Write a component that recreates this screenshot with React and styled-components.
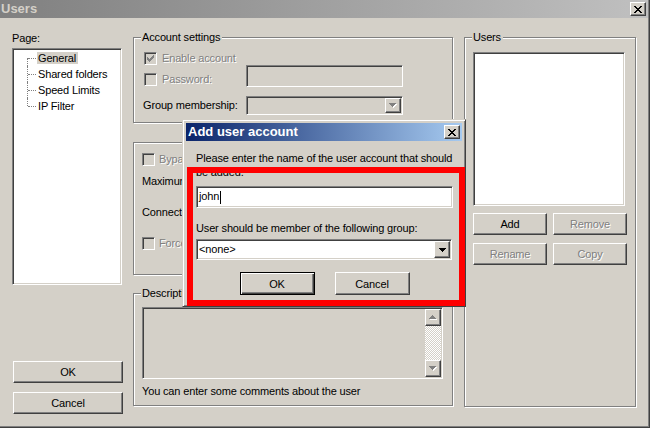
import styled, { createGlobalStyle, css } from 'styled-components';

const face = '#d4d0c8';
const light = '#ffffff';
const shadow = '#808080';
const dark = '#404040';

const GlobalStyle = createGlobalStyle`
  html, body {
    margin: 0;
    padding: 0;
    background: ${face};
  }
  body {
    font-family: "Liberation Sans", Arial, sans-serif;
    font-size: 11px;
    letter-spacing: -0.15px;
    color: #000;
  }
  * { box-sizing: border-box; }
`;

// classic 3D bevels
const raised = css`
  border: 1px solid;
  border-color: ${light} ${dark} ${dark} ${light};
  box-shadow: inset -1px -1px 0 ${shadow};
  background: ${face};
`;

const sunken = css`
  border: 1px solid;
  border-color: ${shadow} ${light} ${light} ${shadow};
  box-shadow: inset 1px 1px 0 ${dark}, inset -1px -1px 0 ${face};
`;

const disabledText = css`
  color: ${shadow};
  text-shadow: 1px 1px 0 ${light};
`;

// small pixel glyphs (caption X, check mark, arrows)
const GLYPHS = {
  close: ['##....##', '.##..##.', '..####..', '...##...', '..####..', '.##..##.', '##....##'],
  check: ['......#', '.....##', '#...###', '##.###.', '#####..', '.###...', '..#....'],
  down: ['#######', '.#####.', '..###..', '...#...'],
  up: ['...#...', '..###..', '.#####.', '#######'],
};

const GlyphSvg = styled.svg`
  display: block;
  flex: none;
`;

const Glyph = ({ name, color = '#000', etched }) => {
  const rows = GLYPHS[name];
  const cells = [];
  rows.forEach((row, y) => [...row].forEach((c, x) => { if (c === '#') cells.push([x, y]); }));
  const pad = etched ? 1 : 0;
  return (
    <GlyphSvg width={rows[0].length + pad} height={rows.length + pad} shapeRendering="crispEdges">
      {etched && cells.map(([x, y]) => (
        <rect key={`e${x}-${y}`} x={x + 1} y={y + 1} width="1" height="1" fill={light} />
      ))}
      {cells.map(([x, y]) => (
        <rect key={`${x}-${y}`} x={x} y={y} width="1" height="1" fill={color} />
      ))}
    </GlyphSvg>
  );
};

const Window = styled.div`
  position: relative;
  width: 650px;
  height: 428px;
  display: flex;
  flex-direction: column;
  background: ${face};
  border-right: 1px solid ${dark};
  border-bottom: 1px solid ${dark};
  box-shadow: inset -1px -1px 0 ${shadow};
  overflow: hidden;
`;

const TitleBar = styled.div`
  flex: none;
  height: 18px;
  margin-right: ${p => p.$inset || 0}px;
  display: flex;
  align-items: center;
  justify-content: space-between;
  padding: 0 2px 0 ${p => p.$pad ?? 1}px;
  background: ${p => (p.$active
    ? 'linear-gradient(to right, #0a246a, #a6caf0)'
    : 'linear-gradient(to right, #808080, #c0c0c0)')};
  color: ${p => (p.$active ? light : face)};
  font-weight: bold;
  font-size: 13px;
  letter-spacing: 0;
  line-height: 18px;
  white-space: nowrap;
`;

const CaptionButton = styled.button`
  ${raised}
  width: 16px;
  height: 14px;
  padding: 0;
  display: flex;
  align-items: center;
  justify-content: center;
`;

const Body = styled.div`
  flex: 1;
  display: flex;
  padding: 0 0 13px 12px;
`;

const Column = styled.div`
  width: ${p => p.$w}px;
  margin-left: ${p => p.$gap || 0}px;
  display: flex;
  flex-direction: column;
`;

const Label = styled.span`
  line-height: 13px;
  white-space: nowrap;
  ${p => p.$disabled && disabledText}
`;

const PageLabel = styled.div`
  margin-top: 13px;
  line-height: 14px;
`;

/* page tree */
const Tree = styled.ul`
  ${sunken}
  width: 110px;
  height: 237px;
  margin: 3px 0 0;
  padding: 1px 0 0 1px;
  list-style: none;
  background: ${light};
`;

const TreeItem = styled.li`
  position: relative;
  height: 16px;
  padding-left: 23px;
  display: flex;
  align-items: center;

  &::before {
    content: '';
    position: absolute;
    left: 14px;
    top: 8px;
    width: 8px;
    border-top: 1px dotted ${shadow};
  }
  &::after {
    content: '';
    position: absolute;
    left: 13px;
    top: ${p => (p.$first ? 8 : 0)}px;
    bottom: ${p => (p.$last ? 8 : 0)}px;
    border-left: 1px dotted ${shadow};
  }
`;

const TreeText = styled.span`
  line-height: 12px;
  padding: 0 2px 0 1px;
  background: ${p => (p.$selected ? face : 'transparent')};
  white-space: nowrap;
`;

const Spacer = styled.div`
  flex: 1;
`;

const ButtonStack = styled.div`
  display: flex;
  flex-direction: column;
  gap: 9px;
  padding-left: 1px;
`;

const Button = styled.button`
  ${raised}
  width: ${p => p.$w}px;
  height: ${p => p.$h || 22}px;
  padding: 0;
  font: inherit;
  letter-spacing: inherit;
  color: #000;
  ${p => p.disabled && disabledText}
  ${p => p.$default && css`
    border-color: #000;
    box-shadow: inset 1px 1px 0 ${light}, inset -1px -1px 0 ${dark}, inset -2px -2px 0 ${shadow};
  `}
`;

/* group boxes */
const GroupBox = styled.div`
  position: relative;
  flex: none;
  height: ${p => p.$h}px;
  margin-top: ${p => p.$top}px;
  padding: ${p => p.$pad};
  border: 1px solid ${shadow};
  box-shadow: inset 1px 1px 0 ${light}, 1px 1px 0 ${light};
  display: flex;
  flex-direction: column;
`;

const Legend = styled.span`
  position: absolute;
  top: -7px;
  left: 7px;
  padding: 0 2px 0 1px;
  line-height: 13px;
  background: ${face};
  white-space: nowrap;
`;

const Row = styled.div`
  display: flex;
  align-items: ${p => p.$align || 'center'};
  height: ${p => p.$h}px;
  margin-top: ${p => p.$top || 0}px;
  margin-left: ${p => p.$indent || 0}px;
`;

const Cell = styled.div`
  width: ${p => p.$w}px;
  flex: none;
  display: flex;
  align-items: center;
  gap: ${p => p.$gap || 5}px;
  margin-top: ${p => p.$top || 0}px;
`;

const CheckBox = styled.span`
  ${sunken}
  width: 13px;
  height: 13px;
  flex: none;
  display: flex;
  align-items: center;
  justify-content: center;
  background: ${p => (p.$disabled ? face : light)};
`;

const Field = styled.div`
  ${sunken}
  position: relative;
  width: ${p => p.$w}px;
  height: ${p => p.$h}px;
  flex: none;
  margin-top: ${p => p.$top || 0}px;
  padding: 2px 2px 2px ${p => p.$textPad ?? 3}px;
  display: flex;
  align-items: center;
  background: ${p => (p.$disabled ? face : light)};
  white-space: nowrap;
`;

const FieldText = styled.span`
  flex: 1;
  line-height: 13px;
`;

const Caret = styled.span`
  display: inline-block;
  width: 1px;
  height: 13px;
  margin-left: 1px;
  vertical-align: middle;
  background: #000;
`;

const DropButton = styled.span`
  ${raised}
  width: 16px;
  align-self: stretch;
  margin: -1px -1px -1px 0;
  display: flex;
  align-items: center;
  justify-content: center;
`;

const TextArea = styled.div`
  ${sunken}
  width: 301px;
  height: 72px;
  padding: 1px;
  display: flex;
  justify-content: flex-end;
  background: ${face};
`;

const ScrollBar = styled.div`
  width: 16px;
  display: flex;
  flex-direction: column;
`;

const ScrollButton = styled.span`
  ${raised}
  height: 17px;
  flex: none;
  display: flex;
  align-items: center;
  justify-content: center;
`;

const ScrollTrack = styled.span`
  flex: 1;
  background: repeating-conic-gradient(${light} 0 25%, ${face} 0 50%) 0 0 / 2px 2px;
`;

const Hint = styled.div`
  margin-top: 6px;
  line-height: 13px;
`;

const ListBox = styled.div`
  ${sunken}
  width: 152px;
  height: 154px;
  background: ${light};
`;

const ButtonGrid = styled.div`
  display: grid;
  grid-template-columns: 74px 74px;
  column-gap: 6px;
  row-gap: 8px;
  margin-top: 7px;
`;

/* add user dialog */
const Dialog = styled.div`
  position: absolute;
  left: 182px;
  top: 119px;
  width: 284px;
  height: 188px;
  padding: 3px;
  border: 1px solid;
  border-color: ${face} ${dark} ${dark} ${face};
  box-shadow: inset 1px 1px 0 ${light}, inset -1px -1px 0 ${shadow};
  background: ${face};
  display: flex;
  flex-direction: column;
`;

const DialogBody = styled.div`
  display: flex;
  flex-direction: column;
  padding: 10px 9px 0 10px;
`;

const Prompt = styled.div`
  line-height: 14px;
  white-space: nowrap;
`;

const DialogLabel = styled.div`
  margin-top: 13px;
  line-height: 14px;
`;

const DialogButtons = styled.div`
  display: flex;
  justify-content: center;
  gap: 20px;
  margin-top: 12px;
`;

const Highlight = styled.div`
  position: absolute;
  left: 187px;
  top: 167px;
  width: 278px;
  height: 139px;
  border: 6px solid #ff0000;
  pointer-events: none;
`;

const pages = ['General', 'Shared folders', 'Speed Limits', 'IP Filter'];

const Check = ({ checked, disabled }) => (
  <CheckBox $disabled={disabled}>
    {checked && <Glyph name="check" color={disabled ? shadow : '#000'} />}
  </CheckBox>
);

const App = () => (
  <>
    <GlobalStyle />
    <Window>
      <TitleBar $inset={1}>
        <span>Users</span>
        <CaptionButton><Glyph name="close" /></CaptionButton>
      </TitleBar>

      <Body>
        <Column $w={111}>
          <PageLabel>Page:</PageLabel>
          <Tree>
            {pages.map((p, i) => (
              <TreeItem key={p} $first={i === 0} $last={i === pages.length - 1}>
                <TreeText $selected={i === 0}>{p}</TreeText>
              </TreeItem>
            ))}
          </Tree>
          <Spacer />
          <ButtonStack>
            <Button $w={110}>OK</Button>
            <Button $w={110}>Cancel</Button>
          </ButtonStack>
        </Column>

        <Column $w={320} $gap={10}>
          <GroupBox $h={86} $top={19} $pad="13px 0 0 10px">
            <Legend>Account settings</Legend>
            <Row $h={15}>
              <Cell $w={102}>
                <Check checked disabled />
                <Label $disabled>Enable account</Label>
              </Cell>
            </Row>
            <Row $h={22} $top={-1} $align="flex-start">
              <Cell $w={102} $top={8}>
                <Check disabled />
                <Label $disabled>Password:</Label>
              </Cell>
              <Field $w={157} $h={22} $disabled />
            </Row>
            <Row $h={19} $top={9} $indent={-1}>
              <Cell $w={103}>
                <Label>Group membership:</Label>
              </Cell>
              <Field $w={157} $h={19} $disabled $textPad={2}>
                <FieldText />
                <DropButton><Glyph name="down" color={shadow} etched /></DropButton>
              </Field>
            </Row>
          </GroupBox>

          <GroupBox $h={133} $top={19} $pad="10px 0 0 8px">
            <Row $h={13}>
              <Cell $w={280} $gap={4}>
                <Check disabled />
                <Label $disabled>Bypass userlimit of server</Label>
              </Cell>
            </Row>
            <Row $h={20} $top={5}>
              <Cell $w={180}><Label>Maximum connection count:</Label></Cell>
              <Field $w={60} $h={20} />
            </Row>
            <Row $h={20} $top={11}>
              <Cell $w={180}><Label>Connection limit per IP:</Label></Cell>
              <Field $w={60} $h={20} />
            </Row>
            <Row $h={13} $top={15}>
              <Cell $w={280} $gap={4}>
                <Check disabled />
                <Label $disabled>Force SSL for user login</Label>
              </Cell>
            </Row>
          </GroupBox>

          <GroupBox $h={113} $top={18} $pad="13px 0 0 8px">
            <Legend>Description</Legend>
            <TextArea>
              <ScrollBar>
                <ScrollButton><Glyph name="up" color={shadow} etched /></ScrollButton>
                <ScrollTrack />
                <ScrollButton><Glyph name="down" color={shadow} etched /></ScrollButton>
              </ScrollBar>
            </TextArea>
            <Hint>You can enter some comments about the user</Hint>
          </GroupBox>
        </Column>

        <Column $w={172} $gap={11}>
          <GroupBox $h={370} $top={19} $pad="14px 0 0 8px">
            <Legend>Users</Legend>
            <ListBox />
            <ButtonGrid>
              <Button $w={74}>Add</Button>
              <Button $w={74} disabled>Remove</Button>
              <Button $w={74} disabled>Rename</Button>
              <Button $w={74} disabled>Copy</Button>
            </ButtonGrid>
          </GroupBox>
        </Column>
      </Body>

      <Dialog>
        <TitleBar $active $pad={2}>
          <span>Add user account</span>
          <CaptionButton><Glyph name="close" /></CaptionButton>
        </TitleBar>
        <DialogBody>
          <Prompt>
            Please enter the name of the user account that should
            <br />
            be added.
          </Prompt>
          <Field $w={257} $h={22} $top={7} $textPad={2}>
            <FieldText>john<Caret /></FieldText>
          </Field>
          <DialogLabel>User should be member of the following group:</DialogLabel>
          <Field $w={256} $h={21} $top={4} $textPad={2}>
            <FieldText>&lt;none&gt;</FieldText>
            <DropButton><Glyph name="down" /></DropButton>
          </Field>
          <DialogButtons>
            <Button $w={75} $h={23} $default>OK</Button>
            <Button $w={75} $h={23}>Cancel</Button>
          </DialogButtons>
        </DialogBody>
      </Dialog>

      <Highlight />
    </Window>
  </>
);

export default App;
